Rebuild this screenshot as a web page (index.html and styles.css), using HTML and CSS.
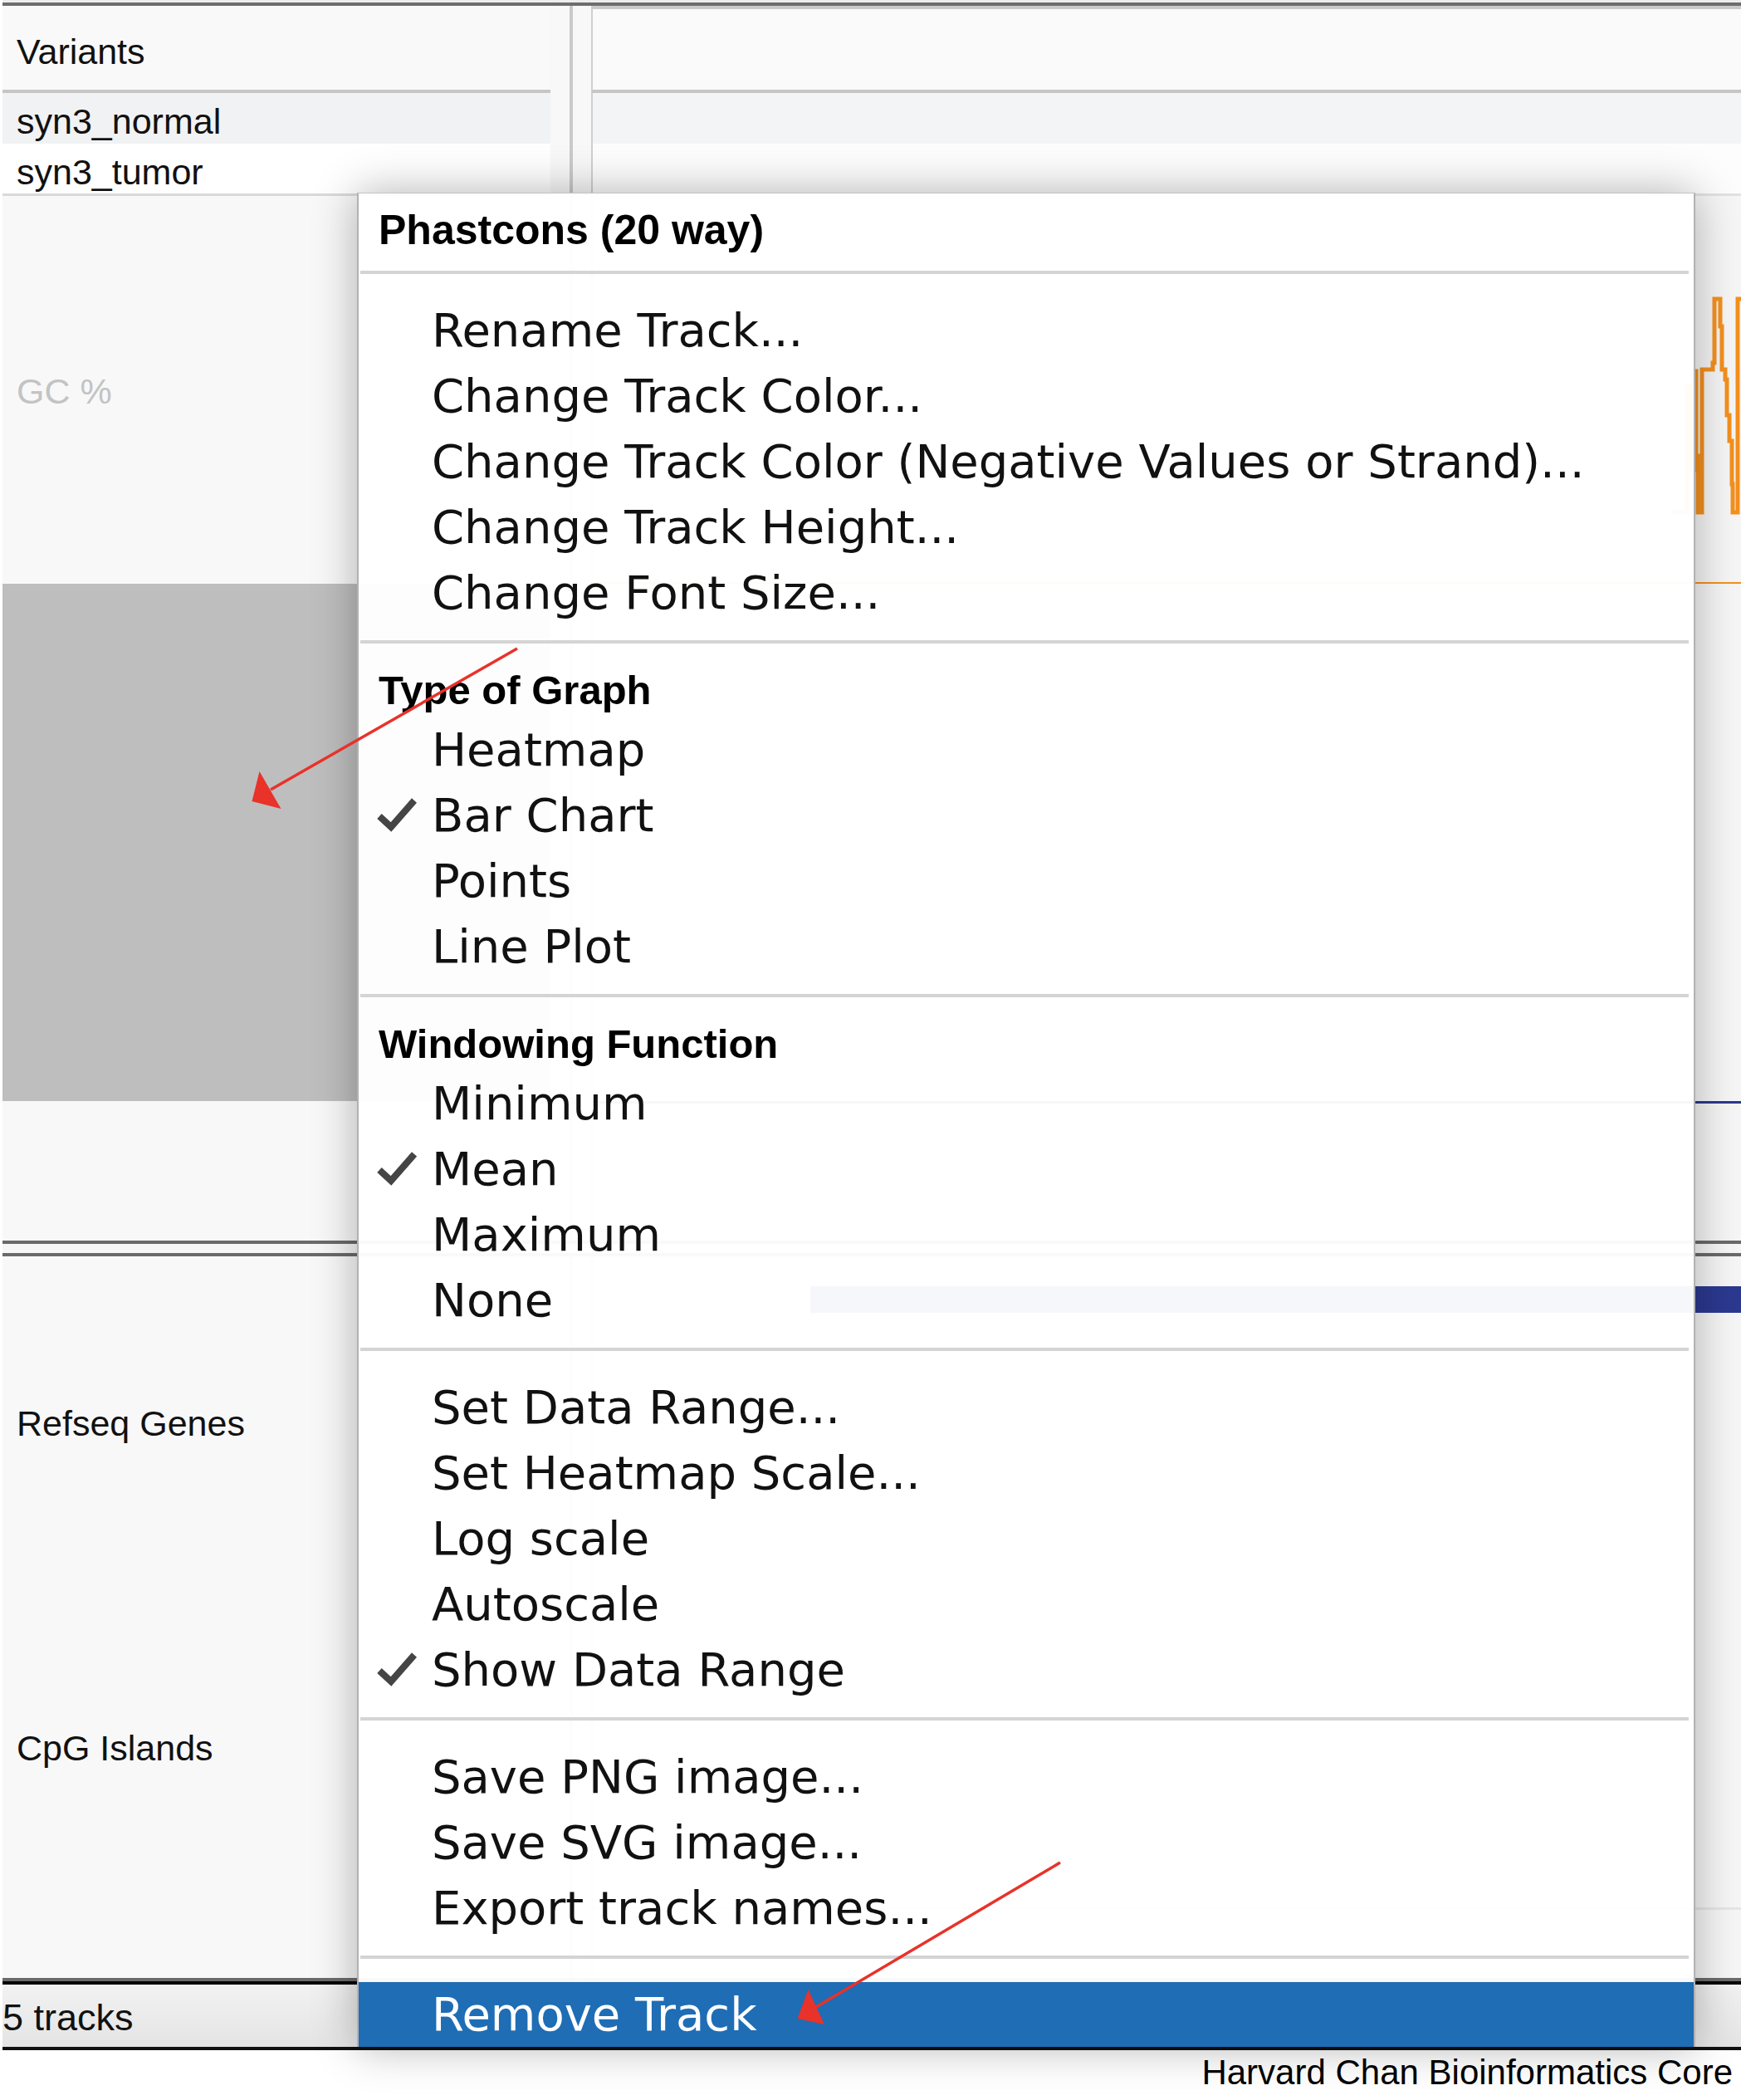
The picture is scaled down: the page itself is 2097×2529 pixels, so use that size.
FILE: index.html
```html
<!DOCTYPE html>
<html lang="en">
<head>
<meta charset="utf-8">
<title>IGV track menu</title>
<link rel="stylesheet" href="styles.css">
</head>
<body>
<div class="app">
  <div class="topline"></div>

  <div class="band band-header">
    <div class="name name-header">Variants</div>
    <div class="gutter"></div>
    <div class="data data-header"></div>
  </div>
  <div class="band band-row">
    <div class="name name-row name-normal">syn3_normal</div>
    <div class="gutter"></div>
    <div class="data data-normal"></div>
  </div>
  <div class="band band-row2">
    <div class="name name-row name-tumor">syn3_tumor</div>
    <div class="gutter"></div>
    <div class="data data-tumor"></div>
  </div>

  <div class="band band-gc">
    <div class="name name-gc">GC %</div>
    <div class="gutter"></div>
    <div class="data data-gc">
      <svg class="plot" width="1383" height="465" viewBox="0 0 1383 465">
        <path d="M1300 381 L1318 381 L1318 230 L1322 230 L1322 330 L1326 330 L1326 211 L1329 211 L1329 313 L1331 313 L1331 381 L1336 381 L1336 209 L1349 209 L1349 201 L1351 201 L1351 124 L1358 124 L1358 157 L1360 157 L1360 209 L1364 209 L1364 221 L1366 221 L1366 264 L1369 264 L1369 295 L1372 295 L1372 347 L1373 347 L1373 381 L1379 381 L1379 124 L1385 124" fill="none" stroke="#f4901e" stroke-width="5"/>
      </svg>
    </div>
  </div>

  <div class="band band-phast">
    <div class="name name-selected"></div>
    <div class="gutter"></div>
    <div class="data"></div>
  </div>

  <div class="band band-blank">
    <div class="name"></div>
    <div class="gutter"></div>
    <div class="data data-blank"></div>
  </div>

  <div class="double-line"></div>

  <div class="band band-refseq">
    <div class="name name-refseq">Refseq Genes</div>
    <div class="gutter"></div>
    <div class="data"><div class="feature"></div></div>
  </div>

  <div class="band band-cpg">
    <div class="name name-cpg">CpG Islands</div>
    <div class="gutter"></div>
    <div class="data"><div class="cpg-line"></div></div>
  </div>

  <div class="status">
    <div class="status-bar">5 tracks</div>
  </div>

  <div class="credit">Harvard Chan Bioinformatics Core</div>
</div>

<div class="menu">
  <div class="menu-title">Phastcons (20 way)</div>
  <div class="sep"></div>
  <div class="section">
    <div class="item"><span class="mark"></span>Rename Track...</div>
    <div class="item"><span class="mark"></span>Change Track Color...</div>
    <div class="item"><span class="mark"></span>Change Track Color (Negative Values or Strand)...</div>
    <div class="item"><span class="mark"></span>Change Track Height...</div>
    <div class="item"><span class="mark"></span>Change Font Size...</div>
  </div>
  <div class="sep"></div>
  <div class="section titled">
    <div class="group-title">Type of Graph</div>
    <div class="item"><span class="mark"></span>Heatmap</div>
    <div class="item"><span class="mark"><svg class="check" width="48" height="44" viewBox="0 0 48 44"><path d="M3 24 L17 37 L45 5" fill="none" stroke="#454545" stroke-width="8"/></svg></span>Bar Chart</div>
    <div class="item"><span class="mark"></span>Points</div>
    <div class="item"><span class="mark"></span>Line Plot</div>
  </div>
  <div class="sep"></div>
  <div class="section titled">
    <div class="group-title">Windowing Function</div>
    <div class="item"><span class="mark"></span>Minimum</div>
    <div class="item"><span class="mark"><svg class="check" width="48" height="44" viewBox="0 0 48 44"><path d="M3 24 L17 37 L45 5" fill="none" stroke="#454545" stroke-width="8"/></svg></span>Mean</div>
    <div class="item"><span class="mark"></span>Maximum</div>
    <div class="item"><span class="mark"></span>None</div>
  </div>
  <div class="sep"></div>
  <div class="section">
    <div class="item"><span class="mark"></span>Set Data Range...</div>
    <div class="item"><span class="mark"></span>Set Heatmap Scale...</div>
    <div class="item"><span class="mark"></span>Log scale</div>
    <div class="item"><span class="mark"></span>Autoscale</div>
    <div class="item"><span class="mark"><svg class="check" width="48" height="44" viewBox="0 0 48 44"><path d="M3 24 L17 37 L45 5" fill="none" stroke="#454545" stroke-width="8"/></svg></span>Show Data Range</div>
  </div>
  <div class="sep"></div>
  <div class="section">
    <div class="item"><span class="mark"></span>Save PNG image...</div>
    <div class="item"><span class="mark"></span>Save SVG image...</div>
    <div class="item"><span class="mark"></span>Export track names...</div>
  </div>
  <div class="sep"></div>
  <div class="section last">
    <div class="item active"><span class="mark"></span>Remove Track</div>
  </div>
</div>

<svg class="arrows" width="2097" height="2529" viewBox="0 0 2097 2529">
  <line x1="623" y1="781" x2="326" y2="951" stroke="#e8322a" stroke-width="3.5"/>
  <polygon points="312.5,929 303.5,965 338.5,974" fill="#e8322a"/>
  <line x1="1277" y1="2243" x2="983" y2="2417" stroke="#e8322a" stroke-width="3.5"/>
  <polygon points="973.5,2396 960.5,2431 993,2438" fill="#e8322a"/>
</svg>
</body>
</html>
```

FILE: styles.css
```css
* { box-sizing: border-box; }

html, body {
  margin: 0;
  padding: 0;
}

body {
  width: 2097px;
  height: 2529px;
  background: #ffffff;
  font-family: "Liberation Sans", Arial, sans-serif;
  color: #111;
  position: relative;
  overflow: hidden;
}

.app {
  display: flex;
  flex-direction: column;
  padding-left: 3px;
}

.topline {
  height: 7px;
  border-top: 3px solid #ededed;
  background: #6d6d6d;
}

.band {
  display: grid;
  grid-template-columns: 660px 49px 1fr;
}

.name {
  background: #f8f8f9;
  font-size: 43px;
  line-height: 48px;
  padding-left: 17px;
  white-space: nowrap;
}

.gutter {
  background: linear-gradient(90deg, #f8f8f9 23px, #cacaca 23px, #cacaca 27px, #f8f8f9 27px);
}

.data {
  border-left: 2px solid #cfcfcf;
  background: #f6f6f6;
}

/* header rows */
.band-header { height: 105px; }
.name-header {
  background: #f9f9f9;
  padding-top: 9px;
  line-height: 92px;
  border-bottom: 4px solid #c6c6c6;
}
.data-header {
  background: #fafafa;
  border-top: 4px solid #cacaca;
  border-bottom: 4px solid #c6c6c6;
}

.band-row { height: 61px; }
.band-row2 { height: 63px; }
.name-row {
  padding-top: 8px;
  line-height: 52px;
}
.name-normal { background: #f1f2f3; }
.data-normal { background: #f3f4f5; }
.name-tumor {
  background: #ffffff;
  border-bottom: 3px solid #d9d9d9;
}
.data-tumor {
  background: #fdfdfd;
  border-bottom: 3px solid #e2e2e2;
}

/* tracks */
.band-gc { height: 467px; }
.name-gc {
  padding-top: 211px;
  color: #c3c3c3;
}
.data-gc {
  border-bottom: 2px solid #f4901e;
}
.plot { display: block; }

.band-phast { height: 623px; }
.name-selected { background: #bebebe; }

.band-blank { height: 168px; }
.data-blank { border-top: 3px solid #2b3990; }

.double-line {
  height: 19px;
  border-top: 4px solid #6a6a6a;
  border-bottom: 4px solid #6a6a6a;
  background: #f6f6f6;
}

.band-refseq { height: 400px; }
.name-refseq { padding-top: 177px; }
.feature {
  margin-top: 36px;
  margin-left: 262px;
  height: 32px;
  background: #2b3990;
}

.band-cpg { height: 469px; }
.name-cpg { padding-top: 168px; }
.cpg-line {
  margin-top: 384px;
  height: 3px;
  background: #e6e6e6;
}

.status {
  border-top: 4px solid #6b6b6b;
}
.status-bar {
  height: 83px;
  border-top: 4px solid #050505;
  border-bottom: 4px solid #111;
  background: linear-gradient(180deg, #f2f2f2, #e4e4e4);
  font-size: 45px;
  line-height: 51px;
  padding-top: 14px;
  padding-left: 0;
}

.credit {
  height: 60px;
  padding-top: 3px;
  padding-right: 10px;
  text-align: right;
  font-size: 42px;
  line-height: 48px;
  color: #000;
  background: #fff;
}

/* popup menu */
.menu {
  position: absolute;
  left: 430px;
  top: 232px;
  width: 1612px;
  background: rgba(255, 255, 255, 0.96);
  border-left: 2px solid #b2b2b2;
  border-right: 2px solid #b2b2b2;
  border-top: 1px solid #c4c4c4;
  box-shadow: 0 0 50px rgba(0, 0, 0, 0.3);
  font-family: "DejaVu Sans", "Liberation Sans", sans-serif;
  color: #111;
}

.menu-title {
  height: 93px;
  line-height: 89px;
  padding-left: 24px;
  font-family: "Liberation Sans", Arial, sans-serif;
  font-weight: bold;
  font-size: 50px;
  color: #000;
}

.sep {
  height: 4px;
  background: #d4d4d4;
  margin: 0 6px 0 2px;
}

.section {
  padding: 28px 0 18px;
}
.section.titled {
  padding-top: 16px;
}
.section.last {
  padding: 28px 0 0;
}

.group-title {
  height: 72px;
  padding-top: 8px;
  line-height: 64px;
  padding-left: 24px;
  font-family: "Liberation Sans", Arial, sans-serif;
  font-weight: bold;
  font-size: 49px;
  color: #000;
}

.item {
  display: flex;
  height: 79px;
  line-height: 79px;
  font-size: 56px;
  white-space: nowrap;
}

.mark {
  flex: 0 0 88px;
  padding-left: 22px;
  padding-top: 17px;
}

.check {
  display: block;
}

.item.active {
  height: 78px;
  line-height: 78px;
  background: #1e6db5;
  color: #fff;
}

.arrows {
  position: absolute;
  left: 0;
  top: 0;
  pointer-events: none;
}
```
